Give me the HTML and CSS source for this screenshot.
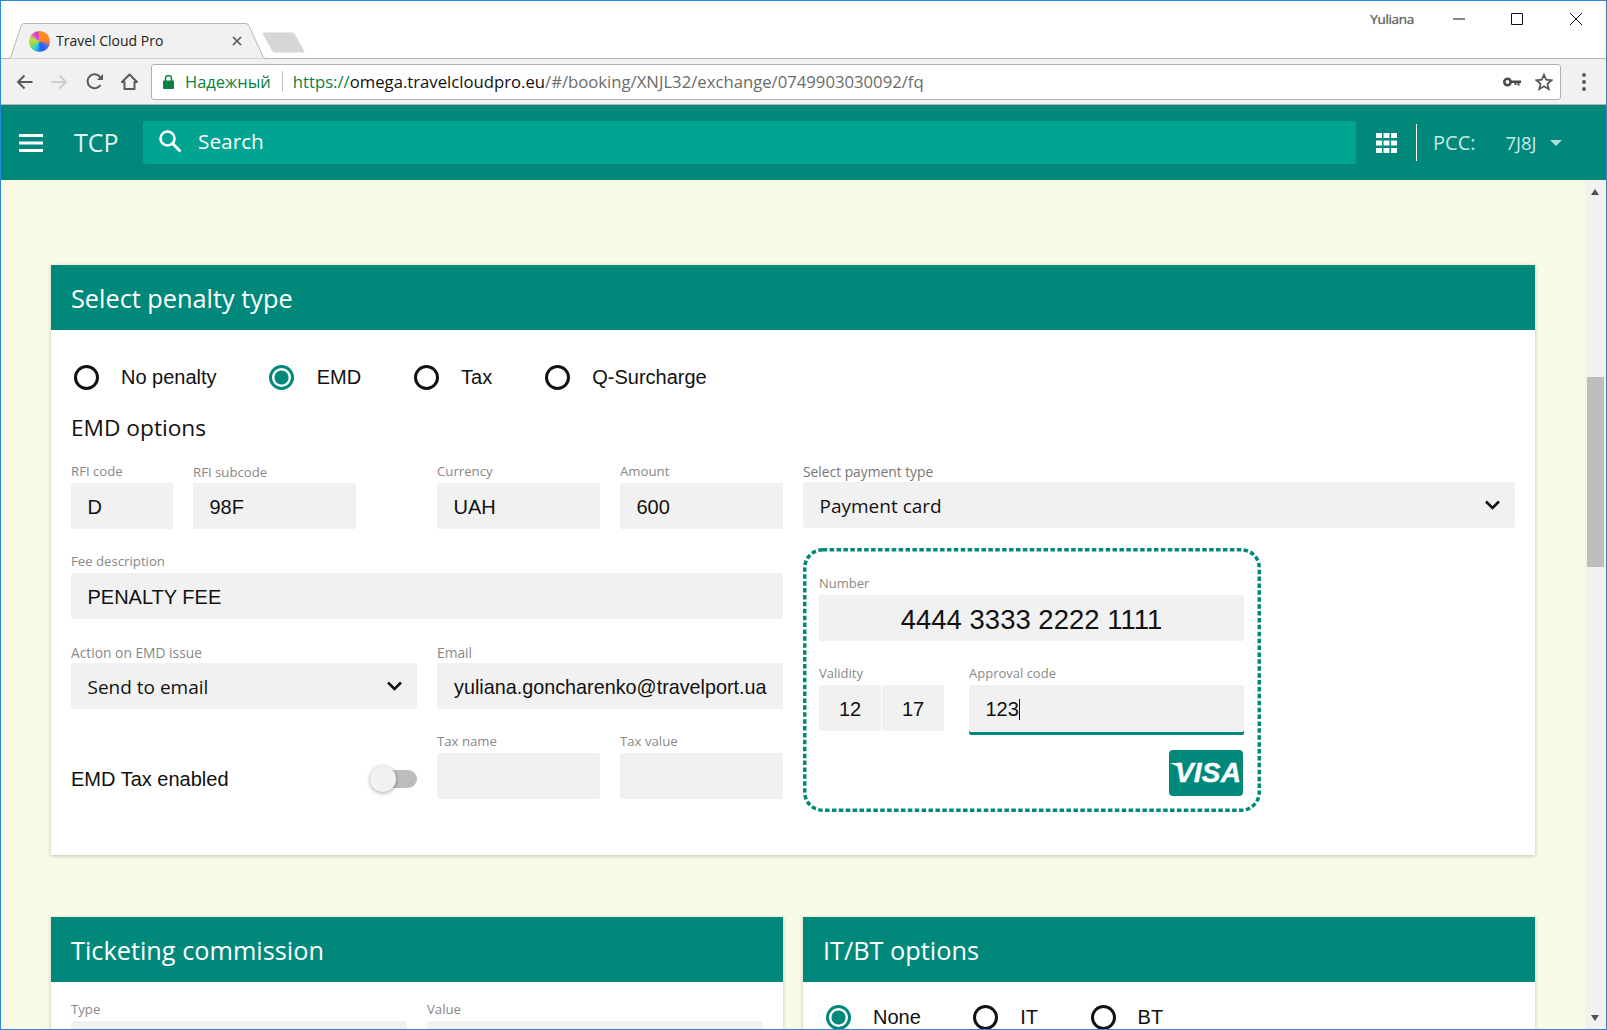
FILE: index.html
```html
<!DOCTYPE html>
<html>
<head>
  <title>Travel Cloud Pro</title>
  <link rel="stylesheet" href="styles.css">
</head>
<body>
  <div class="window">
    <div class="tabstrip">
      <div class="tab">
        <svg class="tab-shape" width="258" height="36" viewBox="0 0 258 36"><path d="M0 35.500q2 0 3-2L13 3q1-2.500 3-2.500h222q2 0 3 2.500l14 30.500q1 2 3 2" fill="#f1f1f1" stroke="#b5b5b5"/></svg>
        <span class="favicon"></span>
        <span class="tab-title">Travel Cloud Pro</span>
        <svg class="tab-close" width="10" height="10" viewBox="0 0 10 10"><path d="M1 1l8 8M9 1l-8 8" stroke="#5a5a5a" stroke-width="1.700"/></svg>
      </div>
      <svg class="newtab" width="43" height="21" viewBox="0 0 43 21"><path d="M3 .5h27q2 0 3 2l9 16q1 2-1 2H13q-2 0-3-2L1 2.500Q0 .5 3 .5z" fill="#d6d6d6"/></svg>
      <div class="winbar">
        <span class="username">Yuliana</span>
        <svg class="win-min" width="12" height="12" viewBox="0 0 12 12"><path d="M0 6h12" stroke="#111"/></svg>
        <svg class="win-max" width="12" height="12" viewBox="0 0 12 12"><path d="M.5.5h11v11H.5z" fill="none" stroke="#111"/></svg>
        <svg class="win-close" width="12" height="12" viewBox="0 0 12 12"><path d="M0 0l12 12M12 0L0 12" stroke="#111"/></svg>
      </div>
    </div>

    <div class="toolbar">
      <svg class="nav-icon" width="17" height="16" viewBox="0 0 17 16"><path d="M16.500 8H2M8.500 1.500L2 8l6.500 6.500" fill="none" stroke="#5a5a5a" stroke-width="2"/></svg>
      <svg class="nav-icon forward" width="17" height="16" viewBox="0 0 17 16"><path d="M.5 8H15M8.500 1.500L15 8l-6.500 6.500" fill="none" stroke="#cdcdcd" stroke-width="2"/></svg>
      <svg class="nav-icon reload" width="18" height="17" viewBox="0 0 18 17"><path d="M14.500 12a7 7 0 1 1 0-7.500" fill="none" stroke="#5a5a5a" stroke-width="2"/><path d="M17 1v6h-6z" fill="#5a5a5a"/></svg>
      <svg class="nav-icon home" width="17" height="17" viewBox="0 0 17 17"><path d="M8.500 1.500L1 9h2.500v7h10V9H16z" fill="none" stroke="#5a5a5a" stroke-width="2" stroke-linejoin="round"/></svg>
      <div class="omnibox">
        <svg class="lock" width="11" height="14" viewBox="0 0 11 14"><path d="M2.500 6V3.500a3 3 0 0 1 6 0V6" fill="none" stroke="#0b8043" stroke-width="1.500"/><rect y="5.500" width="11" height="8.500" rx="1" fill="#0b8043"/></svg>
        <span class="secure">Надежный</span>
        <span class="omni-sep"></span>
        <span class="url"><span class="url-green">https://</span><span class="url-host">omega.travelcloudpro.eu</span>/#/booking/XNJL32/exchange/0749903030092/fq</span>
        <svg class="key" width="18" height="10" viewBox="0 0 18 10"><circle cx="4.500" cy="5" r="3.200" fill="none" stroke="#4a4a4a" stroke-width="2.600"/><path d="M8 3.500h10v2.500h-1.500v2.500h-2V6h-1v2h-2V6H8z" fill="#4a4a4a"/></svg>
        <svg class="star" width="18" height="18" viewBox="0 0 18 18"><path d="M9 1.800l2.200 4.900 5.300.6-4 3.500 1.200 5.300L9 13.300l-4.700 2.800 1.200-5.300-4-3.500 5.300-.6z" fill="none" stroke="#5a5a5a" stroke-width="1.800"/></svg>
      </div>
      <svg class="dots" width="6" height="20" viewBox="0 0 6 20"><circle cx="3" cy="3" r="2" fill="#5a5a5a"/><circle cx="3" cy="10" r="2" fill="#5a5a5a"/><circle cx="3" cy="17" r="2" fill="#5a5a5a"/></svg>
    </div>

    <header class="appbar">
      <svg class="menu-icon" width="24" height="18" viewBox="0 0 24 18"><path d="M0 0h24v3H0zM0 7.500h24v3H0zM0 15h24v3H0z" fill="#fff"/></svg>
      <div class="brand">TCP</div>
      <div class="searchbox">
        <svg width="24" height="24" viewBox="0 0 24 24"><circle cx="9.500" cy="9.500" r="7" fill="none" stroke="#fff" stroke-width="2.600"/><path d="M14.500 14.500l8 8" stroke="#fff" stroke-width="3"/></svg>
        <span>Search</span>
      </div>
      <svg class="apps-icon" width="21" height="20" viewBox="0 0 21 20"><path d="M0 0h6v5H0zM7.500 0h6v5h-6zM15 0h6v5h-6zM0 7.500h6v5H0zM7.500 7.500h6v5h-6zM15 7.500h6v5h-6zM0 15h6v5H0zM7.500 15h6v5h-6zM15 15h6v5h-6z" fill="#fff"/></svg>
      <span class="bar-sep"></span>
      <span class="pcc-label">PCC:</span>
      <span class="pcc-value">7J8J</span>
      <span class="pcc-caret"></span>
    </header>

    <div class="viewport">
      <main class="content">
        <section class="card">
          <h2 class="card-head">Select penalty type</h2>
          <div class="card-body penalty-body">
            <div class="radios">
              <label class="radio-item"><span class="radio"></span>No penalty</label>
              <label class="radio-item"><span class="radio radio-on"></span>EMD</label>
              <label class="radio-item"><span class="radio"></span>Tax</label>
              <label class="radio-item"><span class="radio"></span>Q-Surcharge</label>
            </div>
            <h3 class="subhead">EMD options</h3>
            <div class="columns">
              <div class="left-fields">
                <div class="span-2 rfi-row">
                  <div class="rfi-code">
                    <div class="label">RFI code</div>
                    <div class="field">D</div>
                  </div>
                  <div class="rfi-sub">
                    <div class="label label-low">RFI subcode</div>
                    <div class="field">98F</div>
                  </div>
                </div>
                <div>
                  <div class="label">Currency</div>
                  <div class="field">UAH</div>
                </div>
                <div>
                  <div class="label">Amount</div>
                  <div class="field">600</div>
                </div>
                <div class="span-4">
                  <div class="label">Fee description</div>
                  <div class="field">PENALTY FEE</div>
                </div>
                <div class="span-2">
                  <div class="label label-big">Action on EMD issue</div>
                  <div class="field field-select">Send to email
                    <svg class="chevron" width="15" height="10" viewBox="0 0 15 10"><path d="M1 1.500l6.500 6.500L14 1.500" fill="none" stroke="#111" stroke-width="2.500"/></svg>
                  </div>
                </div>
                <div class="span-2">
                  <div class="label label-big">Email</div>
                  <div class="field field-email">yuliana.goncharenko@travelport.ua</div>
                </div>
                <div class="span-2 toggle-row">
                  <span class="toggle-text">EMD Tax enabled</span>
                  <span class="toggle"><span class="toggle-knob"></span></span>
                </div>
                <div>
                  <div class="label">Tax name</div>
                  <div class="field"></div>
                </div>
                <div>
                  <div class="label">Tax value</div>
                  <div class="field"></div>
                </div>
              </div>

              <div class="right-fields">
                <div class="label label-payment">Select payment type</div>
                <div class="field field-select">Payment card
                  <svg class="chevron" width="15" height="10" viewBox="0 0 15 10"><path d="M1 1.500l6.500 6.500L14 1.500" fill="none" stroke="#111" stroke-width="2.500"/></svg>
                </div>
                <div class="card-panel">
                  <svg class="panel-frame" width="458" height="264" viewBox="0 0 458 264"><rect x="1.750" y="1.750" width="454.500" height="260.500" rx="18" fill="none" stroke="#00897b" stroke-width="3.500" stroke-dasharray="4.500 2.400"/></svg>
                  <div class="label label-panel">Number</div>
                  <div class="field field-number">4444 3333 2222 1111</div>
                  <div class="panel-row">
                    <div class="validity">
                      <div class="label label-panel">Validity</div>
                      <div class="validity-pair">
                        <div class="field field-center">12</div>
                        <div class="field field-center">17</div>
                      </div>
                    </div>
                    <div class="approval">
                      <div class="label label-panel">Approval code</div>
                      <div class="field field-focus">123<span class="caret"></span></div>
                    </div>
                  </div>
                  <div class="visa"><span class="visa-text">VISA</span></div>
                </div>
              </div>
            </div>
          </div>
        </section>

        <div class="bottom-cards">
          <section class="card">
            <h2 class="card-head">Ticketing commission</h2>
            <div class="card-body commission">
              <div>
                <div class="label">Type</div>
                <div class="field"></div>
              </div>
              <div>
                <div class="label">Value</div>
                <div class="field"></div>
              </div>
            </div>
          </section>
          <section class="card">
            <h2 class="card-head">IT/BT options</h2>
            <div class="card-body itbt">
              <div class="radios">
                <label class="radio-item"><span class="radio radio-on"></span>None</label>
                <label class="radio-item"><span class="radio"></span>IT</label>
                <label class="radio-item"><span class="radio"></span>BT</label>
              </div>
            </div>
          </section>
        </div>
      </main>

      <div class="scrollbar">
        <span class="arrow-up"></span>
        <span class="thumb"></span>
        <span class="arrow-down"></span>
      </div>
    </div>
  </div>
</body>
</html>
```

FILE: styles.css
```css
/* page frame */
html, body {
  margin: 0;
  height: 100%;
  overflow: hidden;
}
body {
  font-family: "Liberation Sans", Arial, sans-serif;
  color: #111;
}
.window {
  box-sizing: border-box;
  height: 1030px;
  border: 1px solid #2b87da;
  display: flex;
  flex-direction: column;
  background: #fff;
}

/* browser tab strip */
.tabstrip {
  box-sizing: border-box;
  height: 58px;
  flex: none;
  display: flex;
  align-items: flex-end;
  padding-left: 7px;
  border-bottom: 1px solid #b5b5b5;
}
.tab {
  position: relative;
  width: 258px;
  height: 36px;
  margin-bottom: -1px;
  display: flex;
  align-items: center;
  padding-left: 21px;
  box-sizing: border-box;
}
.tab-shape {
  position: absolute;
  left: 0;
  top: 0;
}
.favicon {
  position: relative;
  width: 21px;
  height: 21px;
  border-radius: 50%;
  background: conic-gradient(#ff8a1f 0 60deg, #ff7a3c 90deg, #2f6bff 130deg, #2a5cf0 170deg, #2bd0e8 210deg, #8fdc3c 250deg, #b8e04a 290deg, #f04fc8 320deg, #c23be0 345deg, #ff8a1f);
}
.tab-title {
  position: relative;
  margin: 0 0 2px 6px;
  font-family: "Open Sans", sans-serif;
  font-size: 14px;
  color: #222;
}
.tab-close {
  position: relative;
  margin-left: auto;
  margin-right: 24px;
}
.newtab {
  margin-left: -4px;
  margin-bottom: 5px;
}
.winbar {
  margin-left: auto;
  align-self: flex-start;
  display: flex;
  align-items: center;
  height: 36px;
  padding-right: 24px;
}
.username {
  font-family: "Open Sans", sans-serif;
  font-size: 13.500px;
  letter-spacing: -.3px;
  color: #666;
  text-shadow: 0 0 1px #888;
  margin-right: 39px;
}
.win-max {
  margin-left: 46px;
}
.win-close {
  margin-left: 47px;
}

/* browser toolbar */
.toolbar {
  box-sizing: border-box;
  height: 46px;
  flex: none;
  display: flex;
  align-items: center;
  padding-left: 15px;
  background: #f1f1f1;
  border-bottom: 1px solid #b5b5b5;
}
.nav-icon {
  margin-right: 18px;
}
.forward {
  margin-right: 18px;
}
.reload {
  margin-right: 17px;
}
.home {
  margin-right: 13px;
}
.omnibox {
  box-sizing: border-box;
  width: 1410px;
  height: 36px;
  flex: none;
  display: flex;
  align-items: center;
  background: #fff;
  border: 1px solid #b0b0b0;
  border-radius: 3px;
  padding-left: 11px;
  font-family: "Open Sans", sans-serif;
  font-size: 16.700px;
}
.secure {
  color: #0b8043;
  margin-left: 11px;
  font-size: 16.500px;
}
.omni-sep {
  width: 1px;
  height: 21px;
  background: #c4c4c4;
  margin: 0 10px 0 11px;
}
.url {
  color: #6b6b6b;
  white-space: nowrap;
}
.url-green {
  color: #0b8043;
}
.url-host {
  color: #111;
}
.key {
  margin-left: auto;
}
.star {
  margin: 0 7px 0 14px;
}
.dots {
  margin-left: 20px;
}

/* app header */
.appbar {
  height: 75px;
  flex: none;
  display: flex;
  align-items: center;
  padding-left: 18px;
  background: #00897b;
  box-sizing: border-box;
}
.brand {
  margin: 0 0 2px 31px;
  width: 69px;
  font-family: "Open Sans", sans-serif;
  font-size: 25px;
  color: #e0f2f1;
}
.searchbox {
  width: 1213px;
  height: 43px;
  box-sizing: border-box;
  display: flex;
  align-items: center;
  padding: 0 0 4px 15px;
  background: #00a591;
  border-radius: 3px;
  color: #fff;
  font-family: "Open Sans", sans-serif;
  font-size: 20.800px;
  font-weight: 500;
}
.searchbox span {
  margin-left: 16px;
}
.apps-icon {
  margin-left: 20px;
}
.bar-sep {
  width: 1px;
  height: 37px;
  margin: 0 16px 0 19px;
  background: #fff;
}
.pcc-label, .pcc-value {
  font-family: "Open Sans", sans-serif;
  font-size: 20px;
  color: #c6e8e4;
}
.pcc-value {
  margin-left: 30px;
  font-size: 18.500px;
}
.pcc-caret {
  margin-left: 13px;
  width: 0;
  height: 0;
  border-left: 6px solid transparent;
  border-right: 6px solid transparent;
  border-top: 6px solid #b2dfdb;
}

/* page area */
.viewport {
  flex: 1;
  min-height: 0;
  display: flex;
  overflow: hidden;
  background: #f9fbe7;
}
.content {
  flex: 1;
  min-width: 0;
  box-sizing: border-box;
  padding: 85px 50px 0;
}
.scrollbar {
  width: 21px;
  flex: none;
  position: relative;
  background: #f1f1f1;
}
.thumb {
  position: absolute;
  left: 2px;
  top: 197px;
  width: 17px;
  height: 190px;
  background: #bdbdbd;
}
.arrow-up, .arrow-down {
  position: absolute;
  left: 6px;
  width: 0;
  height: 0;
  border-left: 4.500px solid transparent;
  border-right: 4.500px solid transparent;
}
.arrow-up {
  top: 9px;
  border-bottom: 6px solid #505050;
}
.arrow-down {
  bottom: 8px;
  border-top: 6px solid #505050;
}

/* cards */
.card {
  background: #fff;
  box-shadow: 0 1px 4px rgba(0, 0, 0, .22);
}
.card-head {
  margin: 0;
  height: 65px;
  box-sizing: border-box;
  padding: 0 20px;
  display: flex;
  align-items: center;
  background: #00897b;
  color: #fff;
  font-family: "Open Sans", sans-serif;
  font-size: 25.300px;
  font-weight: 400;
}
.card-body {
  padding: 35px 20px 43px;
}
.bottom-cards {
  margin-top: 62px;
  display: grid;
  grid-template-columns: 732px 732px;
  gap: 20px;
}

/* radios */
.radios {
  display: flex;
  font-size: 20px;
}
.radio-item {
  display: flex;
  align-items: center;
  height: 25px;
  margin-right: 50px;
}
.radio {
  box-sizing: border-box;
  width: 25px;
  height: 25px;
  margin: 0 22.500px 0 2.500px;
  border: 3px solid #111;
  border-radius: 50%;
}
.radio-on {
  border-color: #00897b;
  background: radial-gradient(circle, #00897b 0 6.500px, #fff 7.500px);
}

/* form */
.subhead {
  margin: 23px 0 21px;
  font-family: "Open Sans", sans-serif;
  font-size: 22.700px;
  line-height: 30px;
  font-weight: 400;
}
.columns {
  display: grid;
  grid-template-columns: 712px 712px;
  gap: 20px;
}
.left-fields {
  padding-top: 1px;
  display: grid;
  grid-template-columns: repeat(4, 163px);
  gap: 26px 20px;
  align-content: start;
}
.span-2 {
  grid-column: span 2;
}
.span-4 {
  grid-column: span 4;
}
.rfi-row {
  display: flex;
  gap: 20px;
}
.rfi-code {
  width: 102px;
}
.rfi-sub {
  width: 163px;
}
.label {
  height: 18px;
  line-height: 12px;
  font-family: "Open Sans", sans-serif;
  font-size: 13.200px;
  color: #888;
}
.label-low {
  line-height: 14px;
}
.label-big {
  font-size: 13.800px;
  line-height: 16px;
}
.label-payment {
  font-size: 13.800px;
  line-height: 16px;
  color: #777;
}
.label-panel {
  font-size: 13px;
  line-height: 12px;
}
.field {
  box-sizing: border-box;
  height: 46px;
  padding: 2px 16.500px 0;
  display: flex;
  align-items: center;
  background: #f1f1f1;
  border-radius: 2px;
  font-size: 20px;
  color: #111;
  white-space: nowrap;
  overflow: hidden;
}
.field-email {
  padding-left: 17px;
  font-size: 19.800px;
}
.field-select {
  justify-content: space-between;
  font-family: "Open Sans", sans-serif;
  font-size: 19px;
  padding-right: 15px;
}
.chevron {
  margin-top: -2px;
}
.toggle-row {
  display: flex;
  align-items: center;
  justify-content: space-between;
  padding-top: 24px;
  font-size: 20px;
}
.toggle {
  position: relative;
  width: 46px;
  height: 18px;
  background: #bdbdbd;
  border-radius: 9px;
}
.toggle-knob {
  position: absolute;
  left: -1px;
  top: -4px;
  width: 26px;
  height: 26px;
  border-radius: 50%;
  background: #f1f1f1;
  box-shadow: 0 1px 4px rgba(0, 0, 0, .35);
}

/* card details box */
.card-panel {
  position: relative;
  box-sizing: border-box;
  width: 458px;
  height: 264px;
  margin-top: 20px;
  padding: 29px 17px 0 16px;
}
.panel-frame {
  position: absolute;
  left: 0;
  top: 0;
}
.field-number {
  justify-content: center;
  font-size: 27.500px;
  padding-top: 3px;
}
.panel-row {
  display: flex;
  gap: 25px;
  margin-top: 26px;
}
.validity-pair {
  display: flex;
  gap: 1px;
}
.validity-pair .field {
  width: 62px;
}
.field-center {
  justify-content: center;
}
.approval {
  flex: 1;
}
.field-focus {
  box-shadow: 0 1px 0 #fff, 0 4px 0 #00897b;
  overflow: visible;
}
.caret {
  width: 1px;
  height: 21px;
  background: #111;
}
.visa {
  margin: 19px 1px 0 auto;
  width: 74px;
  height: 46px;
  display: flex;
  align-items: center;
  justify-content: center;
  background: #00897b;
  border-radius: 4px;
}
.visa-text {
  position: relative;
  left: 2px;
  font-size: 28px;
  font-weight: 700;
  font-style: italic;
  letter-spacing: .2px;
  -webkit-text-stroke: .4px #fff;
  color: #fff;
}
.visa-text::before {
  content: "";
  position: absolute;
  left: -5px;
  top: 6px;
  width: 11px;
  height: 5px;
  background: #fff;
  clip-path: polygon(0 0, 100% 0, 100% 100%);
}

/* lower cards */
.commission {
  display: grid;
  grid-template-columns: 336px 336px;
  gap: 20px;
  padding-top: 21px;
}
.itbt {
  padding-top: 23px;
}
.itbt .radio {
  margin: 0 22px 0 3px;
}
.itbt .radio-item {
  margin-right: 49.500px;
}
```
